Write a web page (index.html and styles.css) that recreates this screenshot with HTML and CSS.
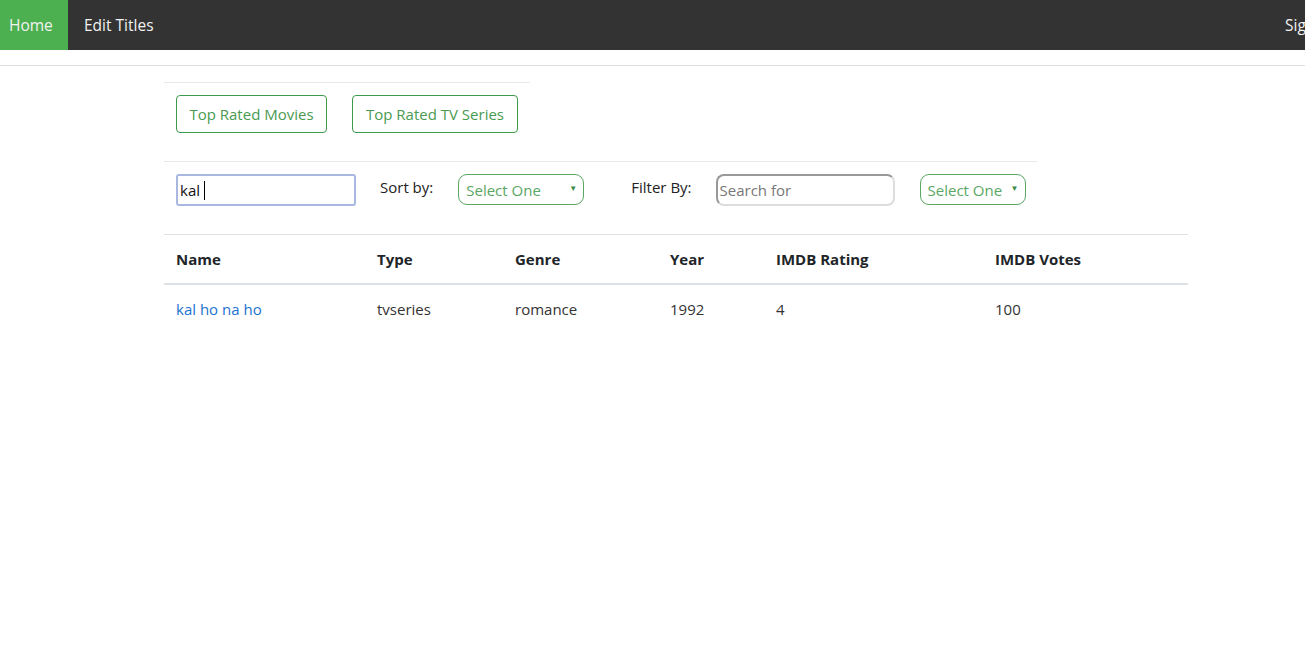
FILE: index.html
```html
<!DOCTYPE html>
<html>
<head>
<meta charset="utf-8">
<link rel="stylesheet" href="styles.css">
</head>
<body>
<nav class="topnav">
  <a class="nav-link active" href="#">Home</a>
  <a class="nav-link" href="#">Edit Titles</a>
  <a class="nav-link right" href="#">Sign Out</a>
</nav>
<div class="sep"></div>
<main class="container">
  <div class="hr short"></div>
  <div class="btn-row">
    <button class="btn">Top Rated Movies</button>
    <button class="btn">Top Rated TV Series</button>
  </div>
  <div class="hr mid"></div>
  <div class="filter-row">
    <div class="search-box"><span class="typed">kal</span><span class="caret"></span></div>
    <span class="label sort-label">Sort by:</span>
    <div class="select sel1"><span>Select One</span><span class="arrow">▼</span></div>
    <span class="label filter-label">Filter By:</span>
    <div class="search-for">Search for</div>
    <div class="select sel2"><span>Select One</span><span class="arrow">▼</span></div>
  </div>
  <table class="titles">
    <colgroup>
      <col class="c1"><col class="c2"><col class="c3"><col class="c4"><col class="c5"><col class="c6">
    </colgroup>
    <thead>
      <tr><th>Name</th><th>Type</th><th>Genre</th><th>Year</th><th>IMDB Rating</th><th>IMDB Votes</th></tr>
    </thead>
    <tbody>
      <tr><td><a href="#" class="title-link">kal ho na ho</a></td><td>tvseries</td><td>romance</td><td>1992</td><td>4</td><td>100</td></tr>
    </tbody>
  </table>
</main>
</body>
</html>
```
FILE: styles.css
```css
html, body { margin: 0; padding: 0; }
body {
  font-family: "Open Sans", "Noto Sans", sans-serif;
  font-size: 15px;
  color: #212529;
  background: #fff;
  overflow: hidden;
  width: 1305px;
}
.topnav {
  display: flex;
  height: 50px;
  background: #333;
  position: relative;
}
.nav-link {
  display: flex;
  align-items: center;
  padding: 0 16px;
  color: #f2f2f2;
  text-decoration: none;
  font-size: 15.5px;
  height: 50px;
  box-sizing: border-box;
}
.nav-link.active { background: #4CAF50; width: 68px; padding: 0 0 0 9px; }
.nav-link.right { position: absolute; left: 1285px; padding: 0; white-space: nowrap; }
.sep { height: 15px; border-bottom: 1px solid #ddd; }
.container { width: 1024px; margin-left: 164px; }
.hr { height: 1px; background: #e8e8e8; }
.hr.short { width: 366px; margin-top: 16px; }
.hr.mid { width: 873px; margin-top: 28px; }
.btn-row { display: flex; gap: 25px; padding: 12px 0 0 12px; }
.btn {
  font-family: inherit;
  font-size: 15px;
  color: #4a9a52;
  background: #fff;
  border: 1px solid #3d9a48;
  border-radius: 4px;
  height: 38px;
  padding: 0 12px;
}
.btn:first-child { width: 151px; }
.btn:last-child { width: 166px; }
.filter-row { display: flex; align-items: flex-start; padding: 12px 0 0 12px; height: 72px; box-sizing: border-box; }
.search-box {
  width: 180px; height: 32px; box-sizing: border-box;
  border: 2px solid #a9b8e0;
  border-radius: 3px;
  display: flex; align-items: center; padding-left: 2px;
  font-size: 15px; color: #111;
}
.caret { display: inline-block; width: 1px; height: 19px; background: #000; margin-left: 4px; }
.label { font-size: 15px; color: #222; margin-top: 3px; }
.sort-label { margin-left: 24px; }
.select {
  height: 31px; box-sizing: border-box;
  border: 1px solid #58a862; border-radius: 9px;
  color: #5aa764; font-size: 15px;
  display: flex; align-items: center; justify-content: space-between;
  padding: 0 6px 0 7px;
}
.arrow { font-size: 8px; color: #3b8a45; margin-top: -4px; }
.sel1 { width: 126px; margin-left: 25px; }
.filter-label { margin-left: 47px; }
.search-for {
  width: 179px; height: 32px; box-sizing: border-box; margin-left: 24px;
  border: 2px solid #ddd; border-top-color: #999; border-left-color: #999;
  border-radius: 8px; color: #777; font-size: 15px;
  display: flex; align-items: center; padding-left: 2px;
}
.sel2 { width: 106px; margin-left: 25px; }
.titles { width: 1024px; border-collapse: collapse; table-layout: fixed; }
.titles col.c1 { width: 201px; }
.titles col.c2 { width: 138px; }
.titles col.c3 { width: 155px; }
.titles col.c4 { width: 106px; }
.titles col.c5 { width: 219px; }
.titles col.c6 { width: 205px; }
.titles th, .titles td { text-align: left; padding: 0 12px; font-size: 15px; }
.titles th { height: 48px; border-top: 1px solid #dee2e6; border-bottom: 2px solid #dee2e6; font-weight: 700; color: #212529; }
.titles td { height: 48px; color: #333; }
.title-link { color: #1a73d0; text-decoration: none; }
```
